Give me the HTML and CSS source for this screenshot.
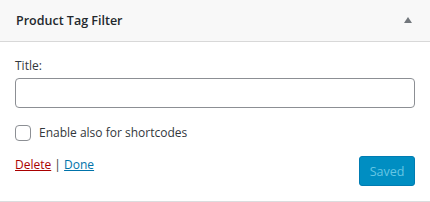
FILE: index.html
```html
<!DOCTYPE html>
<html lang="en">
<head>
  <meta charset="UTF-8" />
  <title>Product Tag Filter widget</title>
  <link rel="stylesheet" href="styles.css">
</head>
<body>
  <div class="widget">
    <div class="widget-top">
      <h3 class="widget-title">Product Tag Filter</h3>
      <span class="toggle-arrow"></span>
    </div>
    <div class="widget-inside">
      <p class="field">
        <label for="widgetTitle">Title:</label>
        <input type="text" id="widgetTitle" class="widefat" />
      </p>
      <p class="check-row">
        <input type="checkbox" id="enableShortcodes" class="checkbox" />
        <label for="enableShortcodes">Enable also for shortcodes</label>
      </p>
      <div class="widget-control-actions">
        <div class="links">
          <a href="#" class="delete-link">Delete</a> | <a href="#" class="done-link">Done</a>
        </div>
        <button class="button-primary" disabled>Saved</button>
      </div>
    </div>
  </div>
</body>
</html>
```

FILE: styles.css
```css
body {
  margin: 0;
  background: #fff;
  font-family: 'Open Sans', 'Noto Sans', sans-serif;
  font-size: 12px;
  color: #32373c;
}
.widget {
  border-bottom: 1px solid #dcdcde;
  height: 201px;
}
.widget-top {
  height: 42px;
  background: #f8f8f8;
  border-bottom: 1px solid #d8d8d8;
  display: flex;
  align-items: center;
  justify-content: space-between;
  padding: 0 16px;
  box-sizing: border-box;
}
.widget-title {
  margin: 0;
  font-size: 12.5px;
  font-weight: 600;
  color: #23282d;
}
.toggle-arrow {
  width: 0;
  height: 0;
  border-left: 4px solid transparent;
  border-right: 4px solid transparent;
  border-bottom: 6px solid #72777c;
  margin-right: 2px;
  margin-top: -2px;
}
.widget-inside {
  padding: 15px 15px 0;
}
.field {
  margin: 0;
}
.field label {
  display: block;
  line-height: 18px;
  color: #32373c;
}
.widefat {
  display: block;
  width: 100%;
  height: 30px;
  box-sizing: border-box;
  margin-top: 3px;
  border: 1px solid #8c8f94;
  border-radius: 4px;
  font: inherit;
  padding: 0 8px;
}
.check-row {
  display: flex;
  align-items: center;
  gap: 8px;
  margin: 16px 0 0;
}
.checkbox {
  appearance: none;
  width: 16px;
  height: 16px;
  margin: 0;
  border: 1px solid #8c8f94;
  border-radius: 4px;
  background: #fff;
}
.widget-control-actions {
  display: flex;
  justify-content: space-between;
  align-items: flex-start;
  margin-top: 15px;
}
.links {
  line-height: 18px;
  color: #32373c;
}
.delete-link {
  color: #a00;
}
.done-link {
  color: #0073aa;
}
.button-primary {
  width: 56px;
  height: 30px;
  padding: 0;
  margin-top: 0;
  font: inherit;
  font-size: 12.5px;
  border-radius: 3px;
  background: #008ec2;
  border: 1px solid #007cb2;
  color: #66c6e4;
}
```
